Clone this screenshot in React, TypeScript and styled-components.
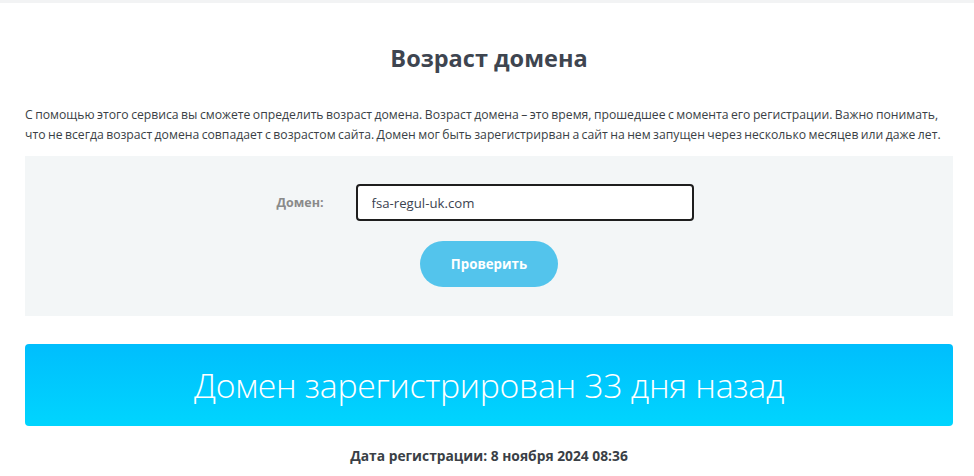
import React from "react";
import styled, { createGlobalStyle } from "styled-components";

const Global = createGlobalStyle`
  html, body { margin: 0; padding: 0; background: #ffffff; }
  body { font-family: "Open Sans", "Noto Sans", sans-serif; }
`;

const TopLine = styled.div`
  height: 3px;
  background: #f2f3f4;
`;

const Page = styled.main`
  width: 928px;
  margin-left: 25px;
  display: flex;
  flex-direction: column;
`;

const Title = styled.h1`
  margin: 38px 0 0;
  height: 34px;
  line-height: 34px;
  text-align: center;
  font-family: "Open Sans", sans-serif;
  font-weight: 700;
  font-size: 23.5px;
  color: #3e4550;
`;

const Intro = styled.p`
  margin: 30px 0 0;
  font-family: "Open Sans", sans-serif;
  font-size: 12.2px;
  line-height: 20px;
  color: #3a3f46;
  word-spacing: -0.7px;
`;

const Panel = styled.section`
  margin-top: 11px;
  height: 160px;
  background: #f3f6f7;
  display: flex;
  flex-direction: column;
  align-items: center;
`;

const FieldRow = styled.div`
  margin-top: 28px;
  display: flex;
  align-items: center;
  margin-right: 8px;
`;

const Label = styled.label`
  width: 79px;
  font-family: "Open Sans", sans-serif;
  font-weight: 700;
  font-size: 12.5px;
  color: #8a8a8a;
`;

const Input = styled.input`
  box-sizing: border-box;
  width: 338px;
  height: 37px;
  border: 2px solid #1e1e1e;
  border-radius: 4px;
  background: #fff;
  padding: 0 14px;
  font-family: "Open Sans", sans-serif;
  font-size: 13.2px;
  color: #3c4350;
  outline: none;
`;

const Button = styled.button`
  margin-top: 20px;
  width: 138px;
  height: 46px;
  border: none;
  border-radius: 23px;
  background: #53c4ec;
  color: #fff;
  font-family: "Open Sans", sans-serif;
  font-weight: 700;
  font-size: 13.3px;
  cursor: pointer;
`;

const Result = styled.div`
  margin-top: 28px;
  height: 82px;
  border-radius: 4px;
  background: linear-gradient(180deg, #00befd 0%, #00d5fe 100%);
  display: flex;
  align-items: center;
  justify-content: center;
  color: #fff;
  font-family: "Open Sans", sans-serif;
  font-weight: 300;
  font-size: 33.8px;
  letter-spacing: -0.3px;
`;

const RegDate = styled.div`
  margin-top: 20px;
  text-align: center;
  font-family: "Open Sans", sans-serif;
  font-weight: 700;
  font-size: 13.8px;
  color: #3a3f46;
`;

export default function App() {
  return (
    <>
      <Global />
      <TopLine />
      <Page>
        <Title>Возраст домена</Title>
        <Intro>
          С помощью этого сервиса вы сможете определить возраст домена. Возраст домена – это время, прошедшее с момента его
          регистрации. Важно понимать, что не всегда возраст домена совпадает с возрастом сайта. Домен мог быть
          зарегистрирван а сайт на нем запущен через несколько месяцев или даже лет.
        </Intro>
        <Panel>
          <FieldRow>
            <Label>Домен:</Label>
            <Input defaultValue="fsa-regul-uk.com" />
          </FieldRow>
          <Button>Проверить</Button>
        </Panel>
        <Result>Домен зарегистрирован 33 дня назад</Result>
        <RegDate>Дата регистрации: 8 ноября 2024 08:36</RegDate>
      </Page>
    </>
  );
}
